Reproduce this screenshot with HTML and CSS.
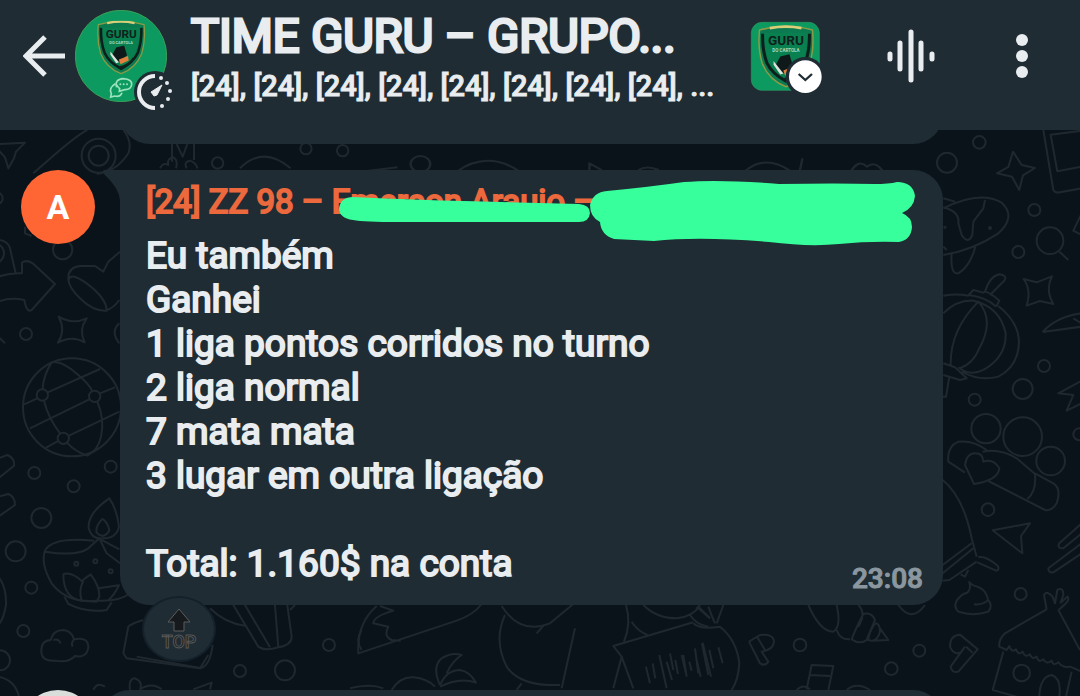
FILE: index.html
```html
<!DOCTYPE html>
<html lang="pt-BR">
<head>
    <meta charset="UTF-8">
    <meta name="viewport" content="width=device-width, initial-scale=1.0">
    <title>TIME GURU</title>
    <link rel="stylesheet" href="styles.css">
</head>
<body>
    <!-- Shield logo used by both group pictures -->
    <svg class="defs" width="0" height="0" aria-hidden="true">
        <symbol id="shield" viewBox="0 0 150 165">
            <path d="M5 12Q75-8 145 12Q150 60 138 100Q120 145 75 162Q30 145 12 100Q0 60 5 12Z" fill="#0b7a50" stroke="#8c9a45" stroke-width="4"/>
            <path d="M32 7Q75-1 116 7" fill="none" stroke="#d9cf79" stroke-width="7"/>
            <path d="M13 22Q12 66 24 98Q38 128 75 147Q112 128 126 98Q138 66 137 22" fill="none" stroke="#0c1f1b" stroke-width="8"/>
            <path d="M19 20H131Q132 62 120 93Q108 122 75 138Q42 122 30 93Q18 62 19 20Z" fill="#08804f"/>
            <text x="75" y="52" class="shield-name">GURU</text>
            <text x="75" y="70" class="shield-sub">DO CARTOLA</text>
            <path d="M60 82L84 76L93 106L68 126L47 106Z" fill="#10191a"/>
            <path d="M42 94L68 127L60 130L42 104Z" fill="#dbe3dc"/>
            <path d="M68 119L96 108L98 122L73 133Z" fill="#e2803b"/>
            <path d="M68 142Q98 138 114 112" fill="none" stroke="#12251c" stroke-width="5"/>
        </symbol>
    </svg>

    <header class="topbar">
        <button type="button" class="icon-btn back" aria-label="Voltar">
            <svg width="42" height="42" viewBox="0 0 42 42">
                <path d="M42 21H4M22 2L3 21L22 40" fill="none" stroke="#e9edef" stroke-width="5"/>
            </svg>
        </button>

        <div class="group-photo">
            <svg width="92" height="92" viewBox="225 30 276 276">
                <circle cx="363" cy="168" r="137" fill="#0d9a61" stroke="#3c9e58" stroke-width="3"/>
                <use href="#shield" x="290" y="62" width="147" height="162"/>
                <g fill="none" stroke="#9be3bd" stroke-width="5">
                    <path d="M350 262Q342 238 370 236Q397 238 395 254Q392 270 374 269L358 274L359 266Q352 260 350 254"/>
                    <path d="M346 251Q325 264 334 281L332 291L344 288Q361 292 366 278"/>
                </g>
                <g fill="#9be3bd"><circle cx="361" cy="253" r="3"/><circle cx="371" cy="253" r="3"/><circle cx="381" cy="253" r="3"/></g>
            </svg>
            <svg class="timer" width="44" height="44" viewBox="0 0 44 44">
                <circle cx="22" cy="22" r="21" fill="#1f2c34"/>
                <path d="M22 6A16 16 0 0 0 22 38" fill="none" stroke="#e9edef" stroke-width="4"/>
                <path d="M21 26L18 22L29 15L24 25Z" fill="#e9edef" stroke="#e9edef" stroke-linejoin="round"/>
                <g fill="#e9edef"><circle cx="28" cy="8" r="2"/><circle cx="34" cy="13" r="2"/><circle cx="37" cy="21" r="2"/><circle cx="35" cy="29" r="2"/><circle cx="29" cy="36" r="2"/></g>
            </svg>
        </div>

        <div class="group-info">
            <h1 class="group-name">TIME GURU – GRUPO...</h1>
            <p class="members">[24], [24], [24], [24], [24], [24], [24], [24], ...</p>
        </div>

        <div class="actions">
            <button type="button" class="icon-btn community" aria-label="Comunidade">
                <svg width="72" height="74" viewBox="-3 -9 216 222">
                    <rect x="1" y="1" width="204" height="204" rx="32" fill="#0d9a61" stroke="#2e9a5c" stroke-width="2"/>
                    <use href="#shield" x="20" y="6" width="170" height="196"/>
                    <circle cx="163" cy="164" r="59" fill="#1f2c34"/>
                    <circle cx="163" cy="164" r="49" fill="#fff"/>
                    <path d="M143 156L163 174L183 156" fill="none" stroke="#1f2c34" stroke-width="7"/>
                </svg>
            </button>
            <button type="button" class="icon-btn" aria-label="Conversa de voz">
                <svg width="48" height="54" viewBox="0 0 48 54" stroke="#e9edef" stroke-width="5" stroke-linecap="round">
                    <path d="M3 25V30M13 14V40M24 3V51M34 14V40M45 25V30"/>
                </svg>
            </button>
            <button type="button" class="icon-btn" aria-label="Mais opções">
                <svg width="12" height="44" viewBox="0 0 12 44" fill="#e9edef">
                    <circle cx="6" cy="6" r="6"/><circle cx="6" cy="22" r="6"/><circle cx="6" cy="38" r="6"/>
                </svg>
            </button>
        </div>
    </header>

    <main class="chat">
        <!-- Wallpaper doodles -->
        <svg class="wallpaper" viewBox="0 130 1080 566" preserveAspectRatio="xMinYMin slice" aria-hidden="true">
            <g transform="translate(0 130) scale(.3333)">
                <path d="M-5 42L75 38L48 65L42 85L25 115L15 82L-5 60M100 130L180 60Q240 10 262 0M370 0Q398 35 385 70Q350 125 290 132"/>
                <circle cx="296" cy="77" r="51"/><circle cx="296" cy="77" r="30"/>
                <path d="M516 42V95M582 42V90M530 42L548 80L562 42M480 115Q490 95 505 105Q500 85 520 82Q535 90 528 115M560 115Q550 95 570 92Q590 100 592 115M720 115Q790 45 872 115"/>
                <circle cx="653" cy="99" r="17"/><circle cx="918" cy="56" r="17"/><circle cx="1028" cy="62" r="17"/>
                <circle cx="188" cy="359" r="29"/><circle cx="78" cy="612" r="18"/><circle cx="-18" cy="370" r="30"/><circle cx="-10" cy="205" r="18"/>
                <path d="M0 330Q25 335 30 355L47 430M-5 440Q30 428 66 430L66 398Q80 388 98 400L165 462L95 540Q80 550 73 510Q30 500 -5 515M75 290V310L95 318"/>
                <path d="M205 450Q202 412 240 408H285L310 425L325 395L360 365M205 450Q212 425 260 460Q320 505 320 542Q280 545 240 505Q208 475 205 450M320 540Q340 535 358 510"/>
                <path d="M176 560Q218 585 260 565Q235 600 254 637Q215 615 174 638Q198 600 176 560Z"/><path d="M358 580Q330 605 358 640M-5 620L15 640"/>
            </g>
            <g transform="translate(0 350) scale(.3333)">
                <circle cx="216" cy="172" r="147"/><circle cx="127" cy="135" r="17"/><circle cx="284" cy="139" r="17"/><circle cx="190" cy="265" r="17"/>
                <path d="M72 163L112 145M143 127L300 57M90 235L268 148M300 130L345 112M138 293L175 273M207 257L358 185M128 118Q130 75 155 37Q185 30 235 75Q265 100 277 123M292 155Q315 210 303 260Q295 300 262 317Q225 305 201 278M181 251Q145 205 132 152"/>
                <circle cx="103" cy="369" r="18"/><circle cx="221" cy="409" r="18"/><circle cx="332" cy="350" r="18"/><circle cx="124" cy="504" r="30"/><circle cx="47" cy="604" r="30"/><circle cx="94" cy="713" r="18"/><circle cx="70" cy="843" r="18"/><circle cx="0" cy="931" r="30"/>
                <path d="M-5 325L22 315Q45 325 42 347L-5 385M-5 440L25 432Q45 440 45 465L-5 500M-5 680Q20 710 18 765Q10 810 -5 825M-5 980Q45 990 57 1040"/>
                <path d="M328 445Q262 490 266 535Q275 570 310 565Q350 565 357 530Q350 475 328 445ZM308 506Q285 530 290 548Q310 570 328 542Q325 520 308 506"/>
                <path d="M282 572Q160 560 136 600Q120 640 155 700Q200 760 290 752Q360 755 390 730M136 605Q230 620 265 595L298 565L320 610L360 640M305 570L358 598"/>
                <path d="M190 672Q215 665 245 693Q255 685 272 673Q300 710 298 740L290 755L245 752Q190 745 190 672M245 752Q235 720 250 693M295 715L357 706Q340 740 325 750M193 740L205 762Q260 790 320 780L335 757"/>
                <circle cx="229" cy="641" r="6"/><circle cx="286" cy="634" r="6"/><circle cx="332" cy="664" r="6"/>
                <path d="M165 932Q125 935 124 905Q122 872 152 870Q160 840 190 840Q215 842 222 868Q265 860 265 892Q260 925 225 918Q205 940 165 932ZM160 870Q175 865 182 880M222 868Q212 880 218 890"/>
                <path d="M430 810Q380 825 384 835L370 910L380 925L600 955Q630 950 638 885"/><path d="M410 920L605 955M600 955L625 915"/>
            </g>
            <g transform="translate(930 130) scale(.3333)">
                <circle cx="51" cy="98" r="30"/><circle cx="148" cy="37" r="19"/><circle cx="313" cy="240" r="18"/><circle cx="360" cy="332" r="40"/><circle cx="265" cy="366" r="18"/><circle cx="342" cy="708" r="18"/><circle cx="278" cy="777" r="30"/><circle cx="134" cy="809" r="18"/>
                <path d="M249 65L275 105L315 114L279 136L268 180L246 140L201 130L235 111ZM340 0L370 180Q375 190 390 187L455 175M455 2L362 14L382 124L455 110M388 365L415 390M455 250L430 302L455 315"/>
                <path d="M40 205L75 215M40 235Q150 180 215 218Q260 260 205 310Q130 360 40 375M40 232Q90 245 85 280L95 315Q115 345 127 315L130 275L160 235L165 210M65 368Q60 435 85 430Q120 410 136 350M40 350L50 360"/>
                <circle cx="180" cy="294" r="3"/><circle cx="45" cy="292" r="2"/>
                <path d="M116 495L130 480L160 488Q170 478 208 512L198 530M116 495Q170 502 198 530M165 485Q180 438 208 433Q240 438 215 460L180 495M40 497Q80 490 116 497M205 528Q265 575 267 635Q265 710 205 740Q150 755 95 725M40 550Q80 510 130 512Q210 530 227 610Q230 680 160 720Q120 740 85 712M62 705Q60 600 145 515Q195 570 148 655Q130 700 90 715M40 700L75 712L110 745L90 750L40 735M58 740L48 800L38 800"/>
                <path d="M281 447L320 457L366 439Q345 480 370 522L330 513L290 527Q305 480 281 447ZM338 606Q380 560 455 550M338 606L455 590M430 565L455 580M455 752L385 790L430 795L410 842L455 820"/>
            </g>
            <g transform="translate(930 410) scale(.3333)">
                <circle cx="168" cy="56" r="44"/><circle cx="278" cy="80" r="58"/><circle cx="362" cy="153" r="43"/><circle cx="448" cy="73" r="18"/><circle cx="174" cy="299" r="19"/><circle cx="272" cy="552" r="18"/><circle cx="275" cy="789" r="25"/>
                <path d="M132 222L105 165Q110 130 135 130Q160 130 160 155Q190 145 208 175Q205 210 132 222ZM105 188L55 155Q50 110 85 95Q130 90 170 120M158 125Q210 115 260 145L315 192Q320 245 292 267M175 213L345 300Q365 305 380 280Q395 235 370 220L315 190"/>
                <path d="M38 210Q100 260 125 385L140 440M38 465L125 400M38 490L130 415M38 512L58 510L140 455M145 442Q165 435 203 467Q210 480 198 482L142 457M92 493L105 500L115 480M188 361L300 340L273 378L277 430ZM455 340L388 400Q380 415 400 415L455 370M455 400L355 475Q355 490 370 487L455 430"/>
                <path d="M117 514Q122 525 142 530Q170 540 174 570Q190 585 175 605Q130 620 85 605Q70 590 80 572Q95 550 112 548Q125 535 117 514M132 583Q160 585 172 572M60 710Q60 675 90 674L143 718L85 785Q65 790 62 770L105 710M60 710Q70 735 90 728M108 710L128 728"/>
                <path d="M350 598L225 670Q205 690 208 710L230 720L238 708Q245 730 258 718Q265 738 278 725Q285 745 300 733Q305 750 320 740Q325 760 340 748Q350 765 365 752Q370 770 385 757Q400 775 420 770L455 785M385 600L450 720M220 725L188 840L260 860M425 785L408 860M328 860Q330 800 365 795Q395 805 388 860M350 598L342 555Q350 540 368 560L375 580L382 540Q400 530 400 555L392 578L412 560Q425 570 385 600"/>
            </g>
            <g transform="translate(350 560) scale(.3333)">
                <path d="M90 138L130 152Q70 170 70 190L115 200Q100 230 125 240L152 242M80 138Q20 190 25 280L320 182Q370 165 395 132M455 138Q510 225 600 190L670 132M560 220L582 195M465 165Q430 240 470 320Q510 380 630 375M675 205L635 385M500 390L515 370M0 385Q60 370 100 385M125 390Q150 350 190 352Q230 355 255 380M270 375Q245 320 275 295Q305 275 335 285Q305 305 290 340M270 375Q290 330 330 330Q360 335 378 368Q330 350 270 380"/>
                <path d="M828 135Q845 190 822 245M845 185Q860 210 892 225M880 135Q920 175 980 175Q1030 170 1050 135M1020 165Q1040 195 1075 200M1040 140L1080 175M1030 187L790 258L815 290L790 385M815 290L850 385M888 320L900 370M908 310L916 355M928 285L950 385M950 305L966 360M976 300L984 342M1000 285L1010 350M1018 305L1025 332M1040 300L1052 350M1056 250L1075 345"/>
            </g>
            <g transform="translate(650 540) scale(.3333)">
                <path d="M130 250Q150 270 210 260Q260 300 268 370Q265 420 245 450M145 200L180 235M175 200Q190 240 195 250M220 195L200 250M60 340L70 390M95 345L108 400M135 325L145 400M158 308L183 410M178 330L190 385M205 322L218 370"/>
                <path d="M475 195Q510 275 550 275Q575 260 560 195M560 270Q570 300 600 298M625 195Q650 220 625 260M640 222Q615 270 605 298Q630 315 650 300L675 240Q665 215 640 222M675 250Q655 280 655 300Q680 310 690 275Q690 250 675 250M690 265L715 300L665 302M745 195Q785 250 825 195"/>
                <path d="M297 305L330 285Q370 280 372 305Q370 330 335 335L355 365Q345 380 330 370L297 305M322 292L345 330M470 448L485 375L550 378L535 450M480 405L540 408M440 450Q460 430 480 448M590 450Q620 425 660 450"/>
                <circle cx="450" cy="315" r="19"/><circle cx="724" cy="386" r="19"/><circle cx="808" cy="332" r="18"/>
            </g>
            <g transform="translate(0 570) scale(.3333)">
                <circle cx="987" cy="225" r="18"/><circle cx="720" cy="303" r="18"/><circle cx="855" cy="301" r="30"/>
                <path d="M630 115Q675 160 735 167M700 105L775 230Q795 245 835 232M735 105L810 232M825 105L835 232Q875 225 875 200L862 105M870 120L885 105M1085 180Q1065 210 1085 240M280 360Q290 335 315 350M390 360Q385 325 405 325Q430 335 420 360M420 358Q455 335 485 358M580 358L635 338L630 358"/>
            </g>
            <g transform="translate(320 130) scale(.4082 .3333)">
                <path d="M335 125Q410 60 490 125M100 125L190 112M660 125V100L690 120M780 120Q800 105 830 120M1040 125Q1090 70 1155 125M1175 125L1182 85M1300 125Q1320 85 1340 110Q1360 90 1380 125"/>
                <circle cx="246" cy="102" r="24"/>
            </g>
        </svg>

        <div class="bubble bubble-prev"></div>

        <article class="message">
            <div class="avatar">A</div>
            <div class="bubble">
                <svg class="tail" width="50" height="30" viewBox="0 0 50 30" aria-hidden="true"><path d="M4 0H50V30H20Q19 18 4 4Q2 1 4 0Z" fill="#1f2c34"/></svg>
                <h2 class="sender">[24] ZZ 98 – Emerson Araujo –</h2>
                <svg class="marker" width="580" height="66" viewBox="0 0 580 66" aria-hidden="true">
                    <path d="M14 17Q80 20 125 21L240 24Q251 25 251 33Q250 42 240 42Q120 42 60 42Q25 42 14 40Q0 38 0 28Q2 17 14 17Z"/>
                    <path d="M268 11Q310 7 345 2Q380-1 440 4Q500 3 535 4Q550 4 558 2Q574 2 576 16Q575 28 563 33Q573 37 573 47Q572 60 560 62Q530 61 500 64Q470 67 430 62Q360 56 315 61L275 59Q262 55 261 42Q251 37 251 25Q254 12 268 11Z"/>
                </svg>
                <p class="text">Eu também
Ganhei
1 liga pontos corridos no turno
2 liga normal
7 mata mata
3 lugar em outra ligação

Total: 1.160$ na conta</p>
                <time class="time">23:08</time>
                <button type="button" class="reaction" aria-label="Reação TOP">
                    <svg width="26" height="26" viewBox="0 0 26 26"><path d="M13 2L24 15H18V24H8V15H2Z" fill="#171a1c" stroke="#5b5c5c"/></svg>
                    <span>TOP</span>
                </button>
            </div>
        </article>

        <div class="message next">
            <div class="avatar avatar-light"></div>
            <div class="bubble"></div>
        </div>
    </main>
</body>
</html>
```

FILE: styles.css
```css
* {
    box-sizing: border-box;
}
body {
    margin: 0;
    height: 100vh;
    display: flex;
    flex-direction: column;
    overflow: hidden;
    font-family: Roboto, "Liberation Sans", sans-serif;
    background-color: #0a131a;
    color: #e9edef;
}
h1, h2, p {
    margin: 0;
}
svg {
    display: block;
}
.defs {
    position: absolute;
}

/* Header */
.topbar {
    display: flex;
    align-items: flex-start;
    padding: 10px 52px 20px 23px;
    background-color: #1f2c34;
}
.icon-btn {
    padding: 0;
    border: none;
    background: none;
    cursor: pointer;
}
.back {
    margin: 25px 10px 0 0;
}
.group-photo {
    position: relative;
    margin-right: 24px;
}
.timer {
    position: absolute;
    right: -10px;
    bottom: -12px;
}
.shield-name {
    font: 700 36px Roboto, sans-serif;
    text-anchor: middle;
    fill: #10201d;
}
.shield-sub {
    font: 700 12px Roboto, sans-serif;
    text-anchor: middle;
    fill: #a9d8bd;
}
.group-info {
    flex: 1;
    min-width: 0;
    white-space: nowrap;
}
.group-name {
    font-size: 47px;
    font-weight: 400;
    line-height: 52px;
    -webkit-text-stroke: 3px #e9edef;
}
.members {
    font-size: 29px;
    font-weight: 500;
    line-height: 48px;
    -webkit-text-stroke: 1px #e9edef;
}
.actions {
    display: flex;
    align-items: center;
    height: 92px;
}
.actions .icon-btn + .icon-btn {
    margin-left: 65px;
}
.actions .icon-btn + .icon-btn:last-child {
    margin-left: 81px;
}

/* Conversation */
.chat {
    position: relative;
    flex: 1;
    min-height: 0;
    overflow: hidden;
}
.wallpaper {
    position: absolute;
    top: 0;
    left: 0;
    width: 100%;
    height: 100%;
    fill: none;
    stroke: #20282f;
    stroke-width: 6;
    stroke-linejoin: round;
}
.bubble {
    position: relative;
    flex: 1;
    background-color: #1f2c34;
    border-radius: 30px;
}
.bubble-prev {
    height: 60px;
    margin: -46px 137px 26px 120px;
}
.message {
    display: flex;
    align-items: flex-start;
    gap: 25px;
    margin: 0 137px 85px 21px;
}
.message .bubble {
    padding: 10px 20px 12px 26px;
}
.avatar {
    position: relative;
    display: flex;
    align-items: center;
    justify-content: center;
    width: 74px;
    height: 74px;
    border-radius: 50%;
    background-color: #ff6634;
    color: #fff;
    font-size: 34px;
    font-weight: 700;
}
.tail {
    position: absolute;
    top: 0;
    left: -20px;
}
.sender {
    position: relative;
    color: #ec683d;
    font-size: 33px;
    font-weight: 400;
    line-height: 44px;
    white-space: nowrap;
    -webkit-text-stroke: 2px #ec683d;
}
.marker {
    position: absolute;
    top: 10px;
    left: 219px;
    fill: #36ff9c;
}
.text {
    padding-top: 10px;
    font-size: 37px;
    font-weight: 400;
    line-height: 44px;
    white-space: pre-line;
    -webkit-text-stroke: 2px #e9edef;
}
.time {
    display: block;
    margin-top: -21px;
    color: #8b979f;
    font-size: 28px;
    font-weight: 500;
    line-height: 28px;
    text-align: right;
    -webkit-text-stroke: 1px #8b979f;
}
.reaction {
    position: absolute;
    bottom: -57px;
    left: 22px;
    display: flex;
    flex-direction: column;
    align-items: center;
    justify-content: center;
    width: 74px;
    height: 66px;
    padding: 0;
    border: 2px solid #14212a;
    border-radius: 50%;
    background-color: #1f2c34;
    color: #1b1f21;
    font: 500 18px/18px Roboto, sans-serif;
    -webkit-text-stroke: 1px #55585a;
    cursor: pointer;
}
.next {
    margin-bottom: 0;
}
.next .bubble {
    height: 60px;
    margin-left: -20px;
}
.avatar-light {
    background-color: #d9dedb;
}
```
